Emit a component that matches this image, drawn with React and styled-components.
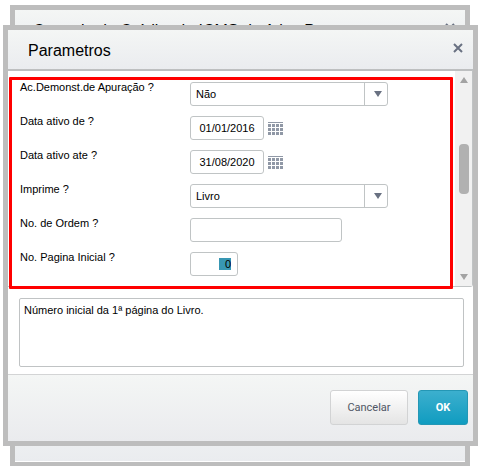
import { useEffect, useRef } from "react";
import styled, { createGlobalStyle } from "styled-components";

const GlobalStyle = createGlobalStyle`
  * {
    box-sizing: border-box;
  }
  body {
    margin: 0;
    background: #fff;
    color: #000;
    font-family: "Liberation Sans", Arial, sans-serif;
    font-size: 11px;
  }
`;

// both windows share one grid cell, the dialog is painted last
const Desktop = styled.main`
  display: grid;
`;

const Window = styled.section`
  grid-area: 1 / 1;
  display: flex;
  flex-direction: column;
  min-width: 0;
  background: #fff;
  border: 5px solid #bdbdbd;
`;

const BackWindow = styled(Window)`
  margin: 5px 16px 0 10px;
  border-bottom-width: 4px;
`;

const Dialog = styled(Window)`
  margin: 25px 8px 20px 3px;
`;

const TitleBar = styled.header`
  display: flex;
  align-items: flex-start;
  justify-content: space-between;
  height: 39px;
  padding: 11px 10px 0 20px;
  background: linear-gradient(#f4f6f5, #eaecef);
`;

const BackTitleBar = styled(TitleBar)`
  padding-left: 18px;
`;

const Title = styled.h1`
  margin: 0;
  overflow: hidden;
  font-size: 16px;
  font-weight: 400;
  line-height: 20px;
  white-space: nowrap;
`;

const CloseButton = styled.button`
  display: flex;
  padding: 2px 0 0;
  border: 0;
  background: none;
  color: #697182;
  cursor: pointer;
`;

const BackFooter = styled.footer`
  height: 64px;
  margin-top: auto;
  border-bottom: 1px solid #fff;
  background: linear-gradient(#f4f6f5, #eaecef);
`;

const ScrollPanel = styled.div`
  display: flex;
  border: 1px solid #c0c3c4;
  border-top: 2px solid #bdbfc0;
  border-left: 0;
  border-radius: 0 0 3px 0;
`;

const Highlight = styled.div`
  flex: 1;
  min-width: 0;
  margin: 6px 2px -3px 1px;
  padding: 2px 8px 10px;
  border: 3px solid #ff0000;
  border-radius: 1px;
`;

const Scrollbar = styled.div`
  display: flex;
  flex-direction: column;
  align-items: center;
  width: 17px;
  padding: 6px 0;
  background: #f1f1f1;
`;

const Thumb = styled.div`
  width: 10px;
  height: 50px;
  margin: 61px 0 auto;
  border-radius: 4px;
  background: #b1b1b1;
`;

const Row = styled.div`
  display: grid;
  grid-template-columns: 170px 1fr;
  align-items: start;
  height: 34px;

  &:last-child {
    height: 24px;
  }
`;

const Label = styled.label`
  line-height: 10px;
`;

const Control = styled.div`
  display: flex;
  align-items: center;
  gap: 4px;
`;

const Input = styled.input`
  width: ${(props) => props.$width};
  height: 24px;
  padding: 0 ${(props) => (props.$align === "right" ? "6px" : "5px")};
  border: 1px solid #c0c4c5;
  border-radius: 3px;
  outline: 0;
  background: #fff;
  color: #000;
  font: inherit;
  line-height: 14px;
  text-align: ${(props) => props.$align || "left"};

  &::selection {
    background: #3897b3;
    color: #000;
  }
`;

const SelectBox = styled.div`
  display: grid;
  grid-template-columns: 1fr 19px;
  align-items: center;
  justify-items: center;
  width: 198px;
  height: 24px;
  border: 1px solid #c0c4c5;
  border-radius: 3px;
  background: linear-gradient(#c0c4c5, #c0c4c5) right 22px top / 1px 100%
    no-repeat;

  svg {
    grid-area: 1 / 2;
    pointer-events: none;
  }
`;

const Select = styled.select`
  grid-area: 1 / 1 / 2 / 3;
  width: 100%;
  height: 22px;
  padding: 0 28px 0 5px;
  border: 0;
  outline: 0;
  appearance: none;
  background: transparent;
  color: #000;
  font: inherit;
`;

const CalendarButton = styled(CloseButton)`
  padding: 0;
  color: #9098a6;
`;

const HelpText = styled.textarea`
  display: block;
  height: 69px;
  margin: 11px 9px 7px 11px;
  padding: 5px 4px;
  border: 1px solid #c0c3c4;
  border-radius: 2px;
  outline: 0;
  resize: none;
  color: #000;
  font: inherit;
  line-height: 13px;
`;

const Footer = styled.footer`
  display: flex;
  justify-content: flex-end;
  gap: 10px;
  padding: 15px 5px 16px;
  border-top: 1px solid #d3d4d5;
  background: linear-gradient(#f4f6f5, #eaebee);
`;

const Button = styled.button`
  width: 78px;
  height: 35px;
  padding: 0;
  border: 1px solid #d2d3d4;
  border-radius: 3px;
  background: linear-gradient(#fff, #e4e4e4);
  color: #4f5665;
  font-family: Roboto, sans-serif;
  font-size: 11px;
  cursor: pointer;
`;

const PrimaryButton = styled(Button)`
  width: 50px;
  border-color: #2497b5;
  background: linear-gradient(#3cafce, #109cc0);
  color: #fff;
  font-weight: 700;
`;

const CloseIcon = () => (
  <svg width="10" height="10" viewBox="0 0 10 10" aria-hidden="true">
    <path
      d="M1 1L9 9M9 1L1 9"
      fill="none"
      stroke="currentColor"
      strokeWidth="2"
    />
  </svg>
);

const Arrow = ({ up, color }) => (
  <svg width="8" height="6" viewBox="0 0 8 6" aria-hidden="true">
    <path d={up ? "M0 6L4 0L8 6Z" : "M0 0H8L4 6Z"} fill={color} />
  </svg>
);

const CalendarIcon = () => (
  <svg width="15" height="13" viewBox="0 0 15 13" aria-hidden="true">
    <rect width="15" height="1" fill="currentColor" />
    {[2, 6, 10].map((y) =>
      [0, 4, 8, 12].map((x) => (
        <rect
          key={`${x}-${y}`}
          x={x}
          y={y}
          width="3"
          height="3"
          fill="currentColor"
        />
      ))
    )}
  </svg>
);

function SelectField({ id, options }) {
  return (
    <SelectBox>
      <Select id={id}>
        {options.map((option) => (
          <option key={option}>{option}</option>
        ))}
      </Select>
      <Arrow color="#697182" />
    </SelectBox>
  );
}

function DateField({ id, value }) {
  return (
    <>
      <Input id={id} $width="74px" $align="center" defaultValue={value} />
      <CalendarButton type="button" aria-label="Calendário">
        <CalendarIcon />
      </CalendarButton>
    </>
  );
}

function Field({ id, label, children }) {
  return (
    <Row>
      <Label htmlFor={id}>{label}</Label>
      <Control>{children}</Control>
    </Row>
  );
}

export default function App() {
  const pageInput = useRef(null);

  useEffect(() => {
    pageInput.current.focus();
    pageInput.current.select();
  }, []);

  return (
    <>
      <GlobalStyle />
      <Desktop>
        <BackWindow>
          <BackTitleBar>
            <Title as="h2">
              Controle de Crédito de ICMS do Ativo Permanente
            </Title>
            <CloseButton type="button" aria-label="Fechar janela">
              <CloseIcon />
            </CloseButton>
          </BackTitleBar>
          <BackFooter />
        </BackWindow>

        <Dialog role="dialog" aria-labelledby="titulo">
          <TitleBar>
            <Title id="titulo">Parametros</Title>
            <CloseButton type="button" aria-label="Fechar">
              <CloseIcon />
            </CloseButton>
          </TitleBar>

          <ScrollPanel>
            <Highlight>
              <Field id="apuracao" label="Ac.Demonst.de Apuração ?">
                <SelectField id="apuracao" options={["Não", "Sim"]} />
              </Field>
              <Field id="data-de" label="Data ativo de ?">
                <DateField id="data-de" value="01/01/2016" />
              </Field>
              <Field id="data-ate" label="Data ativo ate ?">
                <DateField id="data-ate" value="31/08/2020" />
              </Field>
              <Field id="imprime" label="Imprime ?">
                <SelectField id="imprime" options={["Livro", "Termos"]} />
              </Field>
              <Field id="ordem" label="No. de Ordem ?">
                <Input id="ordem" $width="152px" />
              </Field>
              <Field id="pagina" label="No. Pagina Inicial ?">
                <Input
                  id="pagina"
                  ref={pageInput}
                  $width="48px"
                  $align="right"
                  defaultValue="  0"
                />
              </Field>
            </Highlight>
            <Scrollbar>
              <Arrow up color="#a3a3a3" />
              <Thumb />
              <Arrow color="#a3a3a3" />
            </Scrollbar>
          </ScrollPanel>

          <HelpText
            aria-label="Ajuda"
            readOnly
            defaultValue="Número inicial da 1ª página do Livro."
          />

          <Footer>
            <Button type="button">Cancelar</Button>
            <PrimaryButton type="button">OK</PrimaryButton>
          </Footer>
        </Dialog>
      </Desktop>
    </>
  );
}
